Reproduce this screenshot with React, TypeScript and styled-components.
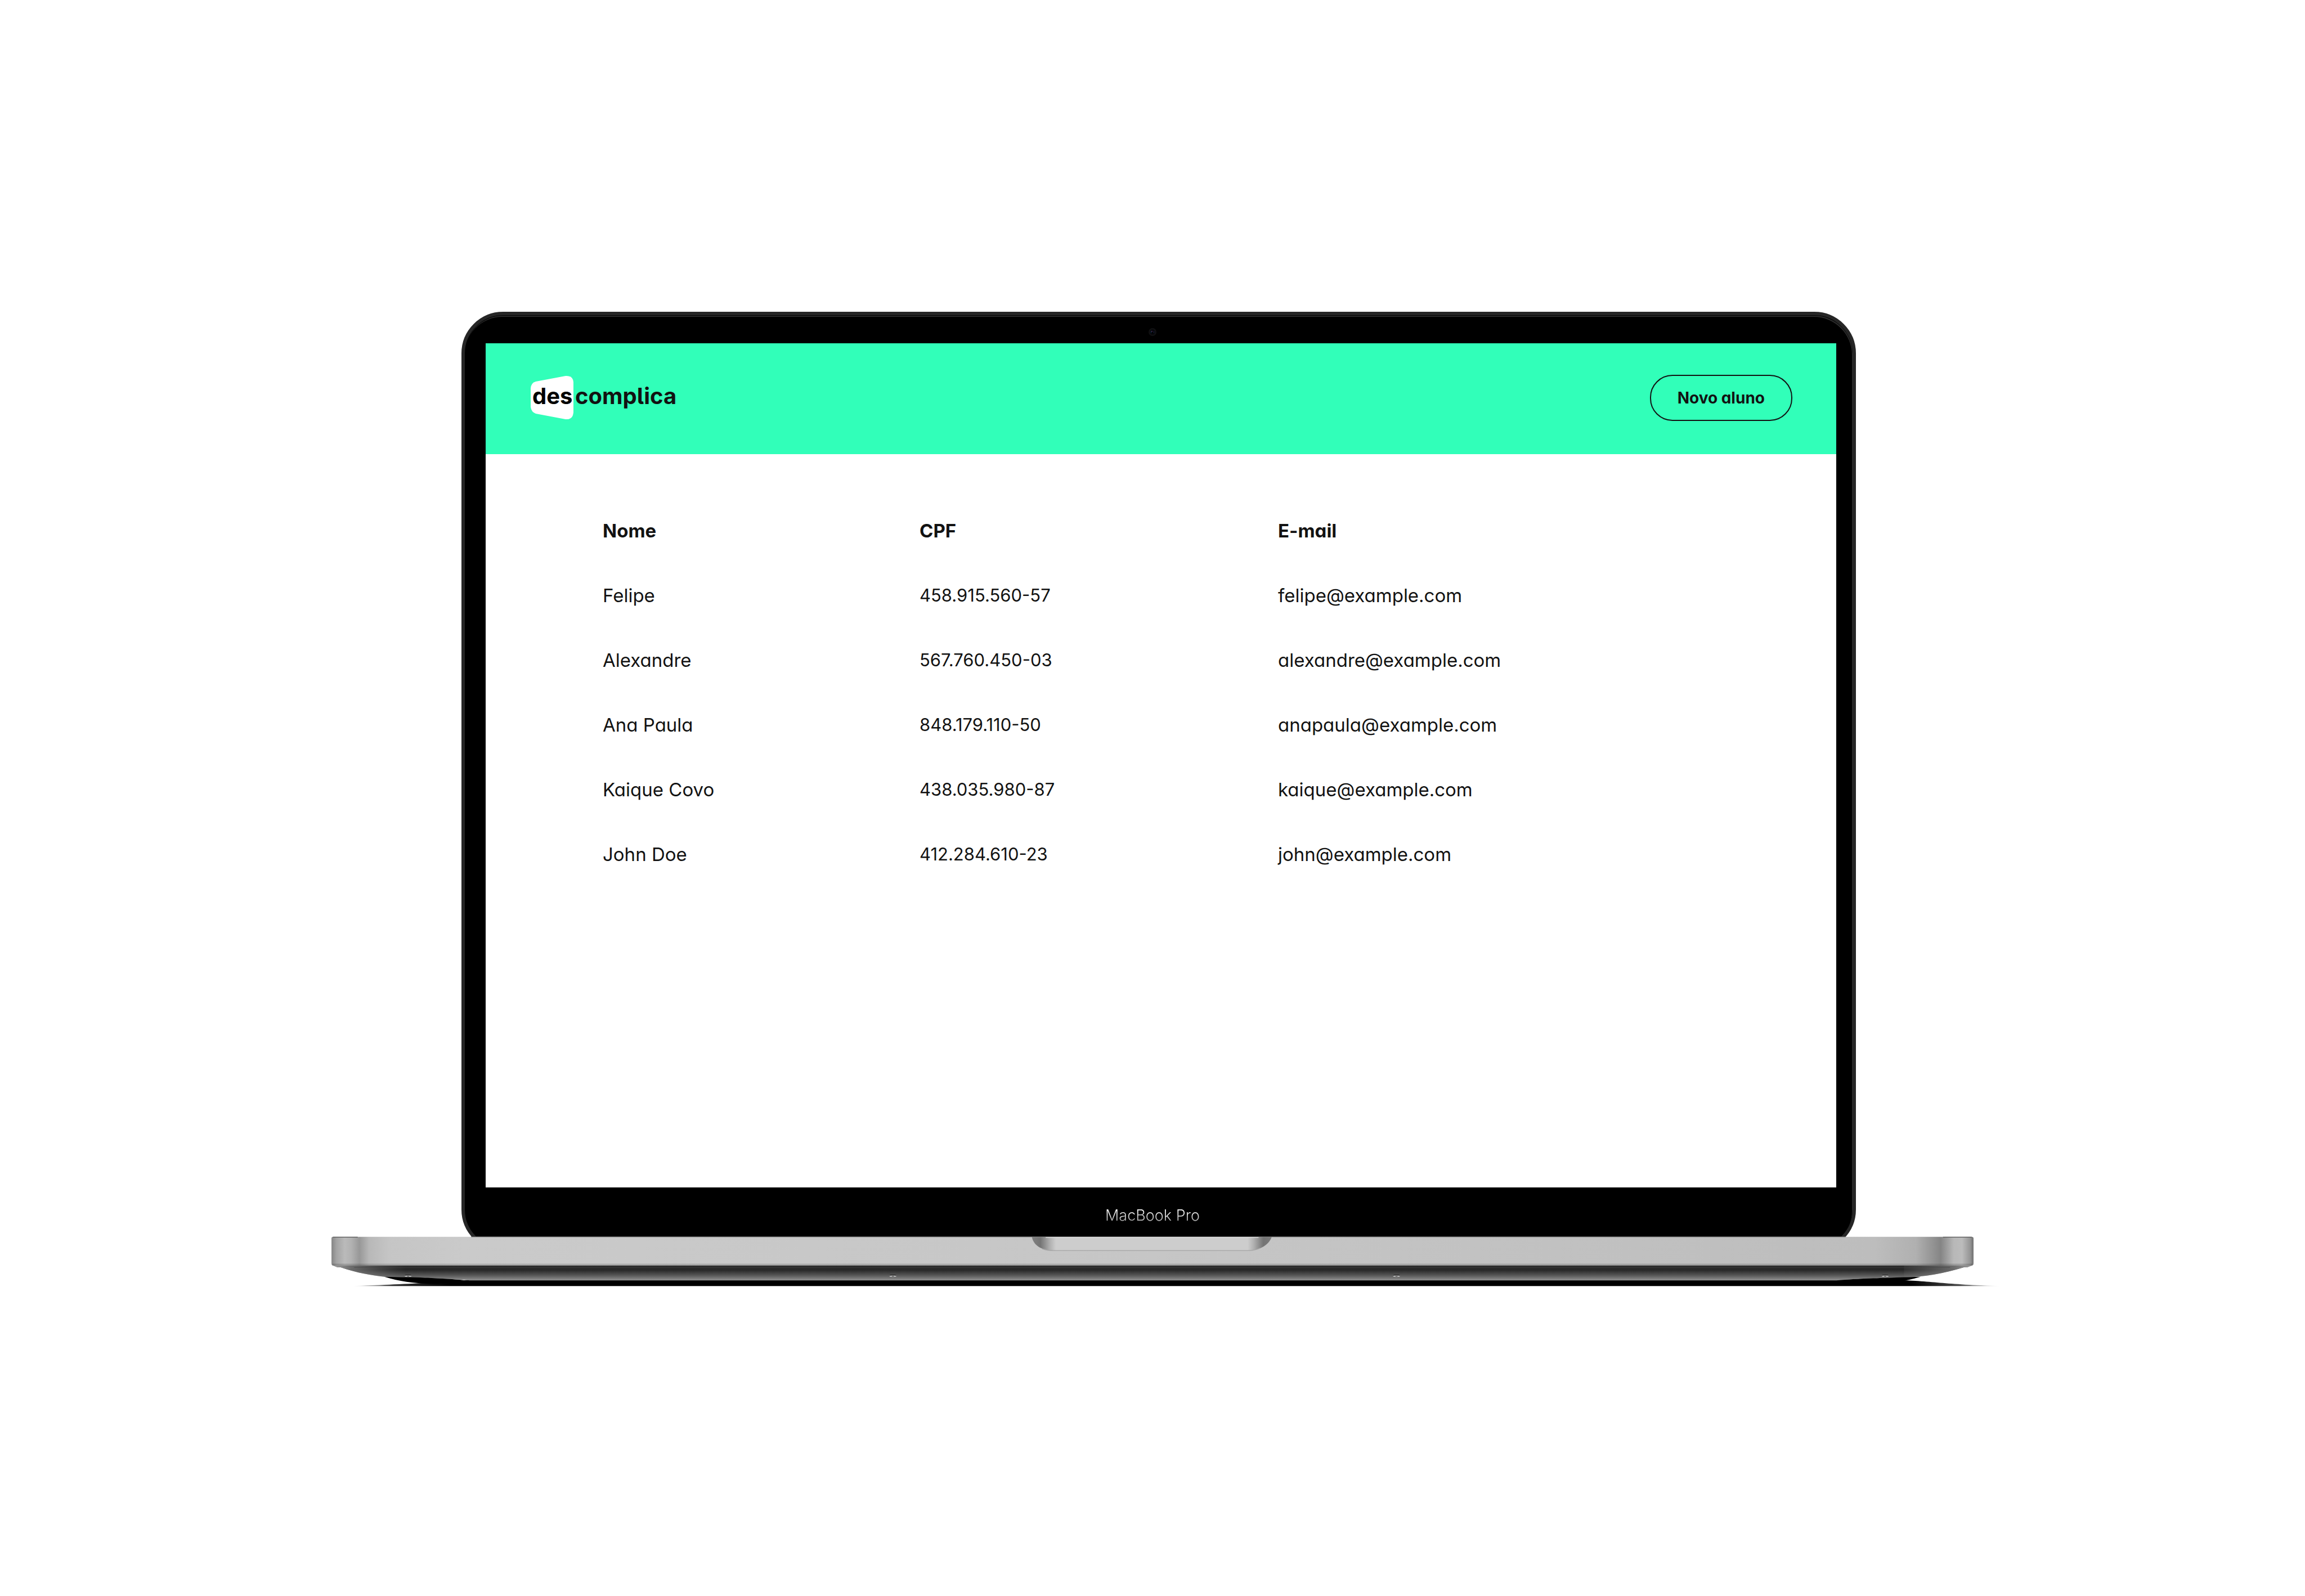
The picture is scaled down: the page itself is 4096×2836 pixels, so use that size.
import React from "react";
import styled, { createGlobalStyle } from "styled-components";

const GlobalStyle = createGlobalStyle`
  *, *::before, *::after { box-sizing: border-box; }
  body {
    margin: 0;
    background: #fff;
    color: #121212;
    font-family: Inter, "Open Sans", sans-serif;
    -webkit-font-smoothing: antialiased;
  }
`;

const Page = styled.main`
  min-height: 100vh;
  padding-top: 4px;
  display: flex;
  align-items: center;
  justify-content: center;
`;

const Laptop = styled.div`
  width: min(2918px, 100%);
  display: flex;
  flex-direction: column;
`;

const Lid = styled.section`
  margin: 0 209px -26px 231px;
  padding: 2px 29px 20px 37px;
  border: 6px solid #262626;
  border-radius: 74px;
  background: #000;
  box-shadow: inset 0 1px 0 #000, inset -1px 3px 0 #2a2a2a;
`;

const Bezel = styled.div`
  display: flex;
  align-items: center;
  justify-content: center;
`;

const TopBezel = styled(Bezel)`
  height: 48px;
  padding: 8px 30px 0 0;
`;

const BottomBezel = styled(Bezel)`
  height: 87px;
  padding: 12px 30px 0 0;
`;

const ModelName = styled.span`
  font-size: 27px;
  line-height: 36px;
  font-weight: 300;
  background: linear-gradient(#fff 20%, #a0a0a0 85%);
  background-clip: text;
  color: transparent;
`;

const Screen = styled.div`
  aspect-ratio: 8 / 5;
  background: #fff;
`;

const Header = styled.header`
  height: 197px;
  padding: 0 78px 4px 80px;
  display: flex;
  align-items: center;
  justify-content: space-between;
  background: #31ffb9;
`;

const LogoLink = styled.a`
  display: flex;
  color: #121212;
  text-decoration: none;
`;

const NewStudentButton = styled.button`
  height: 82px;
  padding: 0 47px;
  border: 2px solid #121212;
  border-radius: 40px;
  background: transparent;
  color: #121212;
  font: 700 28px/36px Inter, "Open Sans", sans-serif;
  font-feature-settings: "cv11";
`;

const Content = styled.div`
  padding: 78px 208px;
`;

const StudentTable = styled.table`
  width: 100%;
  table-layout: fixed;
  border-collapse: collapse;
  font-size: 33px;
  line-height: 48px;
  font-feature-settings: "cv11";
`;

const Column = styled.col<{ $width?: number }>`
  width: ${({ $width }) => ($width ? `${$width}px` : "auto")};
`;

const HeadCell = styled.th`
  height: 115px;
  padding: 0;
  text-align: left;
  font-weight: 700;
`;

const Cell = styled.td<{ $numeric?: boolean }>`
  height: 115px;
  padding: 0;
  font-size: ${({ $numeric }) => ($numeric ? "31px" : "33px")};
`;

const DeckDrawing = styled.svg`
  position: relative;
  display: block;
  width: 100%;
  overflow: visible;
`;

const LogoDrawing = styled.svg`
  font-family: Inter, "Open Sans", sans-serif;
  font-size: 40px;
  font-weight: 700;
  font-feature-settings: "cv05";
  overflow: visible;
`;

const students = [
  { name: "Felipe", cpf: "458.915.560-57", email: "felipe@example.com" },
  { name: "Alexandre", cpf: "567.760.450-03", email: "alexandre@example.com" },
  { name: "Ana Paula", cpf: "848.179.110-50", email: "anapaula@example.com" },
  { name: "Kaique Covo", cpf: "438.035.980-87", email: "kaique@example.com" },
  { name: "John Doe", cpf: "412.284.610-23", email: "john@example.com" },
];

function Camera() {
  return (
    <svg width="14" height="14" viewBox="0 0 22 22" aria-hidden="true">
      <circle cx="11" cy="11" r="11" fill="#101012" />
      <circle cx="11" cy="11" r="7" fill="#030406" />
      <path d="M8 6.500a6 6 0 0 0 0 9z" fill="#12304c" />
      <path d="M14 6.500a6 6 0 0 1 0 9z" fill="#1d2040" />
      <circle cx="9.500" cy="9" r="1.200" fill="#8a3f86" />
    </svg>
  );
}

function Logo() {
  return (
    <LogoDrawing width="264" height="80" viewBox="0 0 264 80" role="img" aria-label="descomplica">
      <path
        d="M9 11 L62 1 Q75 0 76 12 V66 Q75 79 62 78 L9 68 Q1 65 0 56 V23 Q1 13 9 11Z"
        fill="#fff"
      />
      <text x="3" y="51" fill="#000">des</text>
      <text x="79" y="51" fill="#121212">complica</text>
    </LogoDrawing>
  );
}

function Screw({ x }: { x: number }) {
  return (
    <g>
      <ellipse cx={x} cy="3596" rx="9" ry="2" fill="#222" />
      <ellipse cx={x} cy="3598" rx="10" ry="2" fill="#cfcfcf" />
      <ellipse cx={x} cy="3598" rx="4" ry="1" fill="#333" />
    </g>
  );
}

function Deck() {
  return (
    <DeckDrawing viewBox="936 3486 4630 141" aria-hidden="true">
      <defs>
        <linearGradient id="face" gradientUnits="userSpaceOnUse" x1="936" y1="0" x2="5566" y2="0">
          <stop offset="0" stopColor="#858585" />
          <stop offset="0.003" stopColor="#a3a3a3" />
          <stop offset="0.008" stopColor="#bababa" />
          <stop offset="0.012" stopColor="#b2b2b2" />
          <stop offset="0.017" stopColor="#989898" />
          <stop offset="0.023" stopColor="#b8b8b8" />
          <stop offset="0.035" stopColor="#c5c5c5" />
          <stop offset="0.080" stopColor="#cacaca" />
          <stop offset="0.500" stopColor="#c6c6c6" />
          <stop offset="0.940" stopColor="#bdbdbd" />
          <stop offset="0.965" stopColor="#b0b0b0" />
          <stop offset="0.975" stopColor="#949494" />
          <stop offset="0.980" stopColor="#858585" />
          <stop offset="0.988" stopColor="#b8b8b8" />
          <stop offset="0.993" stopColor="#bcbcbc" />
          <stop offset="0.998" stopColor="#959595" />
          <stop offset="1" stopColor="#6e6e6e" />
        </linearGradient>
        <linearGradient id="under" gradientUnits="userSpaceOnUse" x1="0" y1="3568" x2="0" y2="3610">
          <stop offset="0" stopColor="#2c2c2c" />
          <stop offset="0.300" stopColor="#272727" />
          <stop offset="0.650" stopColor="#555" />
          <stop offset="1" stopColor="#909090" />
        </linearGradient>
        <linearGradient id="underEnds" gradientUnits="userSpaceOnUse" x1="936" y1="0" x2="5566" y2="0">
          <stop offset="0" stopColor="#b5b5b5" stopOpacity="0.900" />
          <stop offset="0.012" stopColor="#999" stopOpacity="0.600" />
          <stop offset="0.045" stopColor="#777" stopOpacity="0" />
          <stop offset="0.950" stopColor="#777" stopOpacity="0" />
          <stop offset="0.988" stopColor="#999" stopOpacity="0.600" />
          <stop offset="1" stopColor="#b5b5b5" stopOpacity="0.900" />
        </linearGradient>
        <linearGradient id="ground" gradientUnits="userSpaceOnUse" x1="992" y1="0" x2="5645" y2="0">
          <stop offset="0" stopColor="#000" stopOpacity="0" />
          <stop offset="0.025" stopColor="#000" stopOpacity="0.800" />
          <stop offset="0.060" stopColor="#000" />
          <stop offset="0.945" stopColor="#000" />
          <stop offset="0.975" stopColor="#000" stopOpacity="0.700" />
          <stop offset="1" stopColor="#000" stopOpacity="0" />
        </linearGradient>
        <linearGradient id="notch" gradientUnits="userSpaceOnUse" x1="2911" y1="0" x2="3587" y2="0">
          <stop offset="0" stopColor="#808080" />
          <stop offset="0.035" stopColor="#747474" />
          <stop offset="0.075" stopColor="#b0b0b0" />
          <stop offset="0.100" stopColor="#cdcdcd" />
          <stop offset="0.900" stopColor="#cdcdcd" />
          <stop offset="0.925" stopColor="#b0b0b0" />
          <stop offset="0.965" stopColor="#747474" />
          <stop offset="1" stopColor="#7a7a7a" />
        </linearGradient>
      </defs>
      <path d="M992 3626 C1080 3623 1150 3620 1260 3614 L1320 3609 H5340 C5450 3611 5480 3622 5645 3626Z" fill="url(#ground)" />
      <path
        d="M936 3566 L952 3573 H961 C1010 3590 1050 3596 1085 3600 L1180 3603 C1260 3604 1290 3608 1325 3610 H5180 C5230 3606 5290 3603 5370 3602 C5430 3600 5480 3591 5540 3573 H5549 L5566 3566Z"
        fill="url(#under)"
      />
      <path
        d="M936 3566 L952 3573 H961 C1010 3590 1050 3596 1085 3600 L1180 3603 V3566Z M5566 3566 L5549 3573 H5540 C5480 3591 5430 3600 5370 3602 V3566Z"
        fill="url(#underEnds)"
      />
      <path d="M1000 3573.500 H5500" stroke="#444" strokeWidth="1" />
      <path d="M1085 3600 C1130 3614 1180 3620 1230 3620 C1270 3619 1295 3615 1320 3611 C1270 3604 1200 3602 1085 3600Z" fill="#000" />
      <path d="M5417 3600 C5370 3614 5330 3618 5300 3618 L5180 3610 C5230 3605 5290 3604 5417 3600Z" fill="#000" />
      <path d="M940 3487 H5561 Q5566 3487 5566 3492 V3562 Q5566 3568 5558 3568 H944 Q936 3568 936 3562 V3492 Q936 3487 940 3487Z" fill="url(#face)" />
      <path d="M938 3565.500 H5563" stroke="#000" strokeOpacity="0.150" strokeWidth="5" />
      <path d="M940 3488 H1010 M5480 3488 H5561" stroke="#555" strokeWidth="2" />
      <path d="M1330 3487 H5205" stroke="#555" strokeWidth="2" />
      <path d="M2911 3488 C2915 3510 2937 3526 2972 3526 H3523 C3556 3525 3580 3508 3587 3488Z" fill="url(#notch)" />
      <path d="M2940 3521 Q2955 3526 2972 3526 H3523 Q3540 3526 3554 3519" fill="none" stroke="#a4a4a4" strokeWidth="2" />
      <path d="M2950 3489 H3550" stroke="#e2e2e2" strokeWidth="2" />
      <Screw x={1152} />
      <Screw x={2519} />
      <Screw x={3939} />
      <Screw x={5317} />
    </DeckDrawing>
  );
}

export default function App() {
  return (
    <>
      <GlobalStyle />
      <Page>
        <Laptop>
          <Lid>
            <TopBezel>
              <Camera />
            </TopBezel>
            <Screen>
              <Header>
                <LogoLink href="#" aria-label="descomplica">
                  <Logo />
                </LogoLink>
                <NewStudentButton type="button">Novo aluno</NewStudentButton>
              </Header>
              <Content>
                <StudentTable>
                  <colgroup>
                    <Column $width={563} />
                    <Column $width={637} />
                    <Column />
                  </colgroup>
                  <thead>
                    <tr>
                      <HeadCell scope="col">Nome</HeadCell>
                      <HeadCell scope="col">CPF</HeadCell>
                      <HeadCell scope="col">E-mail</HeadCell>
                    </tr>
                  </thead>
                  <tbody>
                    {students.map((student) => (
                      <tr key={student.cpf}>
                        <Cell>{student.name}</Cell>
                        <Cell $numeric>{student.cpf}</Cell>
                        <Cell>{student.email}</Cell>
                      </tr>
                    ))}
                  </tbody>
                </StudentTable>
              </Content>
            </Screen>
            <BottomBezel>
              <ModelName>MacBook Pro</ModelName>
            </BottomBezel>
          </Lid>
          <Deck />
        </Laptop>
      </Page>
    </>
  );
}
